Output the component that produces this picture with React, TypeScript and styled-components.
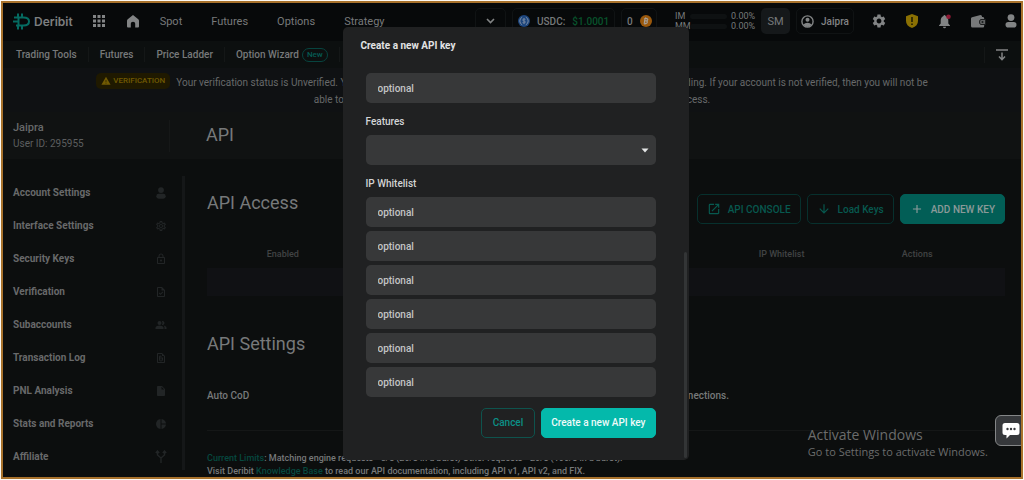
import React from "react";
import styled, { createGlobalStyle, css } from "styled-components";
import {
  MdApps,
  MdSettings,
  MdPeopleAlt,
  MdOutlineSettings,
  MdOutlineLock,
  MdInsertDriveFile,
  MdPieChart,
  MdOpenInNew,
  MdArrowDownward,
  MdAdd,
  MdWarning,
  MdOutlineTask,
  MdOutlineFilePresent,
} from "react-icons/md";

const GlobalStyle = createGlobalStyle`
  * { box-sizing: border-box; }
  body {
    margin: 0;
    background: #fdfaf4;
    font-family: Roboto, "Liberation Sans", sans-serif;
    font-size: 11px;
    color: #77797a;
  }
  h1, h2, p, ul { margin: 0; padding: 0; }
  button, input, select { font: inherit; }
  a { color: inherit; text-decoration: none; }
  svg { flex-shrink: 0; }
`;

const Frame = styled.div`
  position: relative;
  height: calc(100vh - 2px);
  margin: 1px;
  border: 2px solid #a8722c;
  background: #0c0e0e;
  overflow: hidden;
`;

/* Top bar */

const TopBar = styled.header`
  display: flex;
  align-items: center;
  justify-content: space-between;
  height: 38px;
  padding: 0 2px 2px 10px;
  background: #07090a;
`;

const BarGroup = styled.div<{ $gap: number }>`
  display: flex;
  align-items: center;
  gap: ${(p) => p.$gap}px;
`;

const TopIcons = styled(BarGroup)`
  padding-left: 11px;
`;

const Logo = styled.a`
  display: flex;
  align-items: center;
  gap: 3px;
  font-family: Inter, sans-serif;
  font-size: 12px;
  font-weight: 600;
  color: #7d7f80;
`;

const IconButton = styled.button`
  display: flex;
  align-items: center;
  justify-content: center;
  width: 16px;
  height: 16px;
  padding: 0;
  border: 0;
  background: none;
  color: #828485;
`;

const MainNav = styled.nav`
  display: flex;
  gap: 29px;
  padding-left: 1px;
  color: #77797a;
`;

const Chip = styled.div<{ $width?: number }>`
  display: flex;
  align-items: center;
  gap: 7px;
  width: ${(p) => (p.$width ? p.$width + "px" : "auto")};
  height: 26px;
  padding: 0 5px;
  border: 1px solid #101314;
  border-radius: 5px;
  font-size: 10px;
  font-weight: 500;
  white-space: nowrap;
`;

const ChipButton = styled(Chip).attrs({ as: "button" })`
  justify-content: center;
  background: none;
  color: #828485;
`;

const ModeButton = styled.button`
  width: 29px;
  height: 26px;
  padding: 0;
  border: 0;
  border-radius: 5px;
  background: #15181a;
  color: #77797a;
`;

const Price = styled.span`
  color: #07532c;
`;

const Margins = styled.div`
  display: grid;
  grid-template-columns: 11px 37px 24px;
  column-gap: 4px;
  align-items: center;
  justify-content: end;
  width: 92px;
  line-height: 10px;
  font-size: 9px;
`;

const Meter = styled.span`
  height: 5px;
  border-radius: 3px;
  background: #0e1112;
`;

/* Second bar */

const ToolBar = styled.nav`
  display: flex;
  align-items: center;
  height: 27px;
  padding: 0 2px;
  background: #0c0f0f;
`;

const Tool = styled.a`
  display: flex;
  align-items: center;
  gap: 3px;
  height: 15px;
  padding: 0 11px;
  border-right: 1px solid #141717;
  font-size: 10px;
  font-weight: 500;
`;

const NewTag = styled.span`
  padding: 0 4px;
  border: 1px solid #07443f;
  border-radius: 7px;
  line-height: 12px;
  font-size: 8px;
  color: #055c54;
`;

const CollapseButton = styled(IconButton)`
  width: 35px;
  margin-left: auto;
  border-left: 1px solid #141717;
`;

/* Banner and account header */

const Banner = styled.p`
  padding: 5px 24px 4px;
  background: #0f1113;
  line-height: 17px;
  font-size: 10px;
  text-align: center;
  color: #67696a;
`;

const Badge = styled.span`
  display: inline-flex;
  align-items: center;
  gap: 2px;
  margin-right: 6px;
  padding: 0 5px;
  border-radius: 5px;
  background: #1f1900;
  line-height: 16px;
  font-size: 8px;
  font-weight: 500;
  color: #715a02;
`;

const AccountHeader = styled.section`
  display: flex;
  align-items: center;
  height: 47px;
  padding: 0 10px;
  background: #101212;
`;

const AccountName = styled.div`
  width: 157px;
  border-right: 1px solid #161818;
  line-height: 16px;
  font-size: 10px;
  color: #5c5e5f;
  strong {
    display: block;
    font-size: 11px;
    font-weight: 500;
    color: #67696a;
  }
`;

const PageTitle = styled.h1`
  padding: 0 0 2px 36px;
  font-size: 18px;
  font-weight: 400;
  color: #77797a;
`;

/* Body */

const Body = styled.div`
  display: grid;
  grid-template-columns: 182px 1fr;
  padding-top: 17px;
`;

const Side = styled.ul`
  list-style: none;
  padding: 0 15px 0 10px;
  border-right: 3px solid #151718;
  height: 294px;
`;

const SideLink = styled.a`
  display: flex;
  align-items: center;
  justify-content: space-between;
  height: 33px;
  font-size: 10px;
  font-weight: 700;
  color: #68696a;
  svg { color: #222526; }
`;

const Main = styled.main`
  padding: 18px 16px 0 22px;
`;

const SectionHead = styled.div`
  display: flex;
  align-items: flex-start;
  justify-content: space-between;
`;

const SectionTitle = styled.h2`
  font-size: 18px;
  line-height: 18px;
  font-weight: 400;
  color: #77797a;
`;

const Action = styled.button<{ $solid?: boolean }>`
  display: flex;
  align-items: center;
  gap: 7px;
  height: 30px;
  padding: 0 9px;
  border: 1px solid #07302d;
  border-radius: 5px;
  background: none;
  font-size: 10px;
  font-weight: 500;
  color: #07594f;
  ${(p) =>
    p.$solid &&
    css`
      border-color: #025e56;
      background: #025e56;
      color: #8b9a99;
    `}
`;

const KeyTable = styled.table`
  width: 100%;
  margin-top: 15px;
  border-collapse: collapse;
  table-layout: fixed;
  th {
    height: 29px;
    padding: 0;
    font-size: 9px;
    font-weight: 500;
    color: #414344;
  }
  td {
    height: 28px;
    background: #101114;
  }
`;

const SettingsTitle = styled(SectionTitle)`
  margin-top: 39px;
`;

const SettingRow = styled.div`
  display: flex;
  justify-content: space-between;
  max-width: 522px;
  margin-top: 36px;
  line-height: 14px;
  font-size: 10px;
  font-weight: 500;
`;

const Footnote = styled.p`
  margin-top: 27px;
  padding-top: 21px;
  border-top: 1px solid #151717;
  line-height: 13px;
  font-size: 9px;
  font-weight: 500;
  a { color: #06483f; }
`;

/* Dialog */

const Overlay = styled.div`
  position: absolute;
  inset: 0;
  display: flex;
  align-items: center;
  justify-content: center;
  padding: 6px 0 0 7px;
`;

const Dialog = styled.form`
  position: relative;
  width: 346px;
  padding: 11px 33px 22px 23px;
  border-radius: 5px;
  background: #202122;
  color: #d3d4d5;
`;

const DialogTitle = styled.h2`
  margin: 0 0 19px -5px;
  line-height: 16px;
  font-size: 10px;
  font-weight: 700;
  color: #e2e3e4;
`;

const fieldStyle = css`
  display: block;
  width: 100%;
  height: 30px;
  padding: 2px 12px 0;
  border: 0;
  border-radius: 5px;
  background: #373839;
  font-size: 10px;
  font-weight: 500;
  color: #c4c5c6;
`;

const Field = styled.input`
  ${fieldStyle}
  &::placeholder { color: #c4c5c6; opacity: 1; }
`;

const Select = styled.select`
  ${fieldStyle}
  appearance: none;
`;

const SelectWrap = styled.div`
  position: relative;
  svg {
    position: absolute;
    right: 7px;
    top: 13px;
  }
`;

const FieldLabel = styled.label`
  display: block;
  padding: 11px 0 5px;
  line-height: 16px;
  font-size: 10px;
  font-weight: 500;
`;

const FieldList = styled.div`
  display: grid;
  gap: 4px;
`;

const DialogActions = styled.div`
  display: flex;
  justify-content: flex-end;
  gap: 6px;
  margin-top: 11px;
`;

const DialogButton = styled.button<{ $primary?: boolean }>`
  height: 30px;
  padding: 0 ${(p) => (p.$primary ? 9 : 11)}px;
  border: 1px solid ${(p) => (p.$primary ? "#04b9ab" : "#0e534d")};
  border-radius: 5px;
  background: ${(p) => (p.$primary ? "#04b9ab" : "transparent")};
  font-size: 10px;
  font-weight: 500;
  color: ${(p) => (p.$primary ? "#eefaf9" : "#0b9086")};
`;

const ScrollThumb = styled.div`
  position: absolute;
  right: 2px;
  bottom: 2px;
  width: 3px;
  height: 206px;
  border-radius: 2px;
  background: #333536;
`;

/* Floating items */

const Watermark = styled.div`
  position: absolute;
  right: 33px;
  bottom: 17px;
  font-family: "Open Sans", "Noto Sans", sans-serif;
  font-size: 11px;
  line-height: 16px;
  color: #6b6c6c;
  strong {
    display: block;
    font-size: 14px;
    line-height: 18px;
    font-weight: 400;
  }
`;

const ChatButton = styled.button`
  position: absolute;
  right: -5px;
  bottom: 31px;
  display: flex;
  align-items: center;
  justify-content: center;
  width: 31px;
  height: 31px;
  padding: 0;
  border: 1px solid #848687;
  border-radius: 6px;
  background: #36383b;
`;

const LogoMark = () => (
  <svg width="18" height="17" viewBox="0 0 18 17" fill="none" stroke="#056b61" strokeWidth="2">
    <path d="M5 0.5V4M9 0.5V4M5 13V16.5M9 13V16.5" />
    <path d="M1 4.5H10.5C14 4.5 16 6 16 8.5S14 12.5 10.5 12.5H3M0 8.500H6.500M5.500 4.500V12.500" />
  </svg>
);

const HomeIcon = () => (
  <svg width="12" height="13" viewBox="0 0 12 13" fill="currentColor">
    <path d="M6 0 L11.300 4.300 Q12 4.900 12 5.800 V11.500 Q12 12.500 11 12.500 H8.200 V8.600 Q8.200 6.800 6 6.800 T3.800 8.600 V12.500 H1 Q0 12.500 0 11.500 V5.800 Q0 4.900 0.700 4.300 Z" />
  </svg>
);

const ChevronIcon = () => (
  <svg width="9" height="6" viewBox="0 0 9 6" fill="none" stroke="currentColor" strokeWidth="1.600">
    <path d="M1 1L4.500 4.500L8 1" />
  </svg>
);

const UsdcIcon = () => (
  <svg width="12" height="12" viewBox="0 0 12 12" fill="none">
    <circle cx="6" cy="6" r="6" fill="#1c457d" />
    <path d="M4.200 2.200A4.200 4.200 0 0 0 4.200 9.800M7.800 2.200A4.200 4.200 0 0 1 7.800 9.800" stroke="#7d8da3" />
    <path d="M7.400 4.800Q7.200 4 6 4T4.600 5Q4.600 5.800 6 6T7.400 7Q7.400 8 6 8T4.600 7.200M6 3V9" stroke="#7d8da3" strokeWidth="0.800" />
  </svg>
);

const CoinIcon = () => (
  <svg width="12" height="12" viewBox="0 0 12 12" fill="none">
    <circle cx="6" cy="6" r="6" fill="#9a580c" />
    <path d="M5 3.200L4.200 8.800M4.300 3.600H6.800Q8 3.800 7.700 4.900T6.200 5.900H4.800M6.200 5.900Q7.600 6.200 7.300 7.300T5.800 8.400H3.700M5.800 2.400L5.600 3.400M5 8.600L4.800 9.600" stroke="#a5a09a" strokeWidth="1.100" />
  </svg>
);

const UserRingIcon = () => (
  <svg width="13" height="13" viewBox="0 0 13 13" fill="none">
    <circle cx="6.500" cy="6.500" r="5.600" stroke="#828485" strokeWidth="1.400" />
    <circle cx="6.500" cy="4.800" r="2" fill="#828485" />
    <path d="M2.300 9.600Q4 7.800 6.500 7.800T10.700 9.600Q9 12 6.500 12T2.300 9.600Z" fill="#828485" />
  </svg>
);

const ShieldIcon = () => (
  <svg width="12" height="14" viewBox="0 0 12 14">
    <path d="M6 0L12 2.200V7Q12 11.800 6 14Q0 11.800 0 7V2.200Z" fill="#8a7003" />
    <path d="M6 3V8M6 9.500V11" stroke="#1a1703" strokeWidth="1.500" />
  </svg>
);

const BellIcon = () => (
  <svg width="16" height="16" viewBox="0 0 16 16">
    <path d="M7.500 2Q8.500 2 8.500 3Q11.300 4 11.300 7.500V10.500L13 12.500V13H2V12.500L3.700 10.500V7.500Q3.700 4 6.500 3Q6.500 2 7.500 2ZM6 13.700H9Q9 15.200 7.500 15.200T6 13.700Z" fill="#828485" />
    <circle cx="11.500" cy="3.800" r="2.300" fill="#8d1833" />
  </svg>
);

const WalletIcon = () => (
  <svg width="15" height="13" viewBox="0 0 15 13">
    <path d="M0 3.500Q0 2.500 1 2.200L9.500 0Q11 0 11 1.500V2H12Q13.200 2 13.200 3.500V11Q13.200 12.500 12 12.500H1.500Q0 12.500 0 11Z" fill="#77797a" />
    <path d="M10 4.500H14.500V9.500H10Q8.500 9.500 8.500 7T10 4.500Z" fill="#606263" stroke="#1b1d1e" />
    <circle cx="11.500" cy="7" r="1" fill="#1b1d1e" />
  </svg>
);

const PersonIcon = ({ size }: { size: number }) => (
  <svg width={size} height={size} viewBox="0 0 14 14" fill="currentColor">
    <circle cx="7" cy="3.600" r="3.400" />
    <rect x="1.500" y="8" width="11" height="5.600" rx="2.800" />
  </svg>
);

const CollapseIcon = () => (
  <svg width="12" height="12" viewBox="0 0 12 12" fill="none" stroke="#828485" strokeWidth="1.500">
    <path d="M0 1H12M6 3.500V10.500M3 7.500L6 10.700L9 7.500" />
  </svg>
);

const ForkIcon = () => (
  <svg width="12" height="13" viewBox="0 0 12 13" fill="none" stroke="currentColor" strokeWidth="1.400">
    <path d="M6 13V8L2.500 5V2M6 8L9.500 5V2M0.800 3L2.500 1L4.200 3M7.800 3L9.500 1L11.200 3" />
  </svg>
);

const CaretIcon = () => (
  <svg width="8" height="5" viewBox="0 0 8 5">
    <path d="M0.500 0.500H7.500L4 4.500Z" fill="#e4e5e6" />
  </svg>
);

const ChatIcon = () => (
  <svg width="18" height="16" viewBox="0 0 18 16">
    <path d="M3 0H15Q17.500 0 17.500 2.500V9.500Q17.500 12 15 12H8L4.500 15.500V12H3Q0.500 12 0.500 9.500V2.500Q0.500 0 3 0Z" fill="#fff" />
    <circle cx="5.500" cy="6" r="1.200" fill="#36383b" />
    <circle cx="9" cy="6" r="1.200" fill="#36383b" />
    <circle cx="12.500" cy="6" r="1.200" fill="#36383b" />
  </svg>
);

const sideItems: [string, React.ReactNode][] = [
  ["Account Settings", <PersonIcon size={12} />],
  ["Interface Settings", <MdOutlineSettings size={12} />],
  ["Security Keys", <MdOutlineLock size={12} />],
  ["Verification", <MdOutlineTask size={12} />],
  ["Subaccounts", <MdPeopleAlt size={12} />],
  ["Transaction Log", <MdOutlineFilePresent size={12} />],
  ["PNL Analysis", <MdInsertDriveFile size={12} />],
  ["Stats and Reports", <MdPieChart size={12} />],
  ["Affiliate", <ForkIcon />],
];

export default function App() {
  return (
    <>
      <GlobalStyle />
      <Frame>
        <TopBar>
          <BarGroup $gap={18}>
            <Logo href="#">
              <LogoMark />
              Deribit
            </Logo>
            <IconButton aria-label="Apps"><MdApps size={18} /></IconButton>
            <IconButton aria-label="Home"><HomeIcon /></IconButton>
            <MainNav>
              <a href="#">Spot</a>
              <a href="#">Futures</a>
              <a href="#">Options</a>
              <a href="#">Strategy</a>
            </MainNav>
          </BarGroup>
          <BarGroup $gap={6}>
            <ChipButton $width={31} aria-label="More"><ChevronIcon /></ChipButton>
            <Chip $width={103}>
              <UsdcIcon />
              <span>USDC:</span>
              <Price>$1.0001</Price>
            </Chip>
            <Chip $width={36}>0 <CoinIcon /></Chip>
            <Margins>
              <span>IM</span><Meter /><span>0.00%</span>
              <span>MM</span><Meter /><span>0.00%</span>
            </Margins>
            <ModeButton>SM</ModeButton>
            <ChipButton $width={58}><UserRingIcon /> Jaipra</ChipButton>
            <TopIcons $gap={17}>
              <IconButton aria-label="Settings"><MdSettings size={16} /></IconButton>
              <IconButton aria-label="Security"><ShieldIcon /></IconButton>
              <IconButton aria-label="Notifications"><BellIcon /></IconButton>
              <IconButton aria-label="Wallet"><WalletIcon /></IconButton>
              <IconButton aria-label="Profile"><PersonIcon size={14} /></IconButton>
            </TopIcons>
          </BarGroup>
        </TopBar>

        <ToolBar>
          <Tool href="#">Trading Tools</Tool>
          <Tool href="#">Futures</Tool>
          <Tool href="#">Price Ladder</Tool>
          <Tool href="#">Option Wizard <NewTag>New</NewTag></Tool>
          <CollapseButton aria-label="Collapse"><CollapseIcon /></CollapseButton>
        </ToolBar>

        <Banner>
          <Badge><MdWarning size={10} /> VERIFICATION</Badge>
          Your verification status is Unverified. Your account must be fully verified by our team before you are able to start trading. If your account is not verified, then you will not be
          <br />
          able to deposit or trade on the platform and your trading account will have limited access.
        </Banner>

        <AccountHeader>
          <AccountName>
            <strong>Jaipra</strong>
            User ID: 295955
          </AccountName>
          <PageTitle>API</PageTitle>
        </AccountHeader>

        <Body>
          <Side>
            {sideItems.map(([name, icon]) => (
              <li key={name}>
                <SideLink href="#">{name}{icon}</SideLink>
              </li>
            ))}
          </Side>
          <Main>
            <SectionHead>
              <SectionTitle>API Access</SectionTitle>
              <BarGroup $gap={6}>
                <Action><MdOpenInNew size={14} /> API CONSOLE</Action>
                <Action><MdArrowDownward size={14} /> Load Keys</Action>
                <Action $solid><MdAdd size={14} /> ADD NEW KEY</Action>
              </BarGroup>
            </SectionHead>
            <KeyTable>
              <colgroup>
                <col width="19%" />
                <col width="23%" />
                <col width="24%" />
                <col width="12%" />
                <col width="22%" />
              </colgroup>
              <thead>
                <tr>
                  <th>Enabled</th>
                  <th>Name</th>
                  <th>Scope</th>
                  <th>IP Whitelist</th>
                  <th>Actions</th>
                </tr>
              </thead>
              <tbody>
                <tr><td colSpan={5} /></tr>
              </tbody>
            </KeyTable>
            <SettingsTitle>API Settings</SettingsTitle>
            <SettingRow>
              <span>Auto CoD</span>
              <span>Enable Cancel on Disconnect for new connections.</span>
            </SettingRow>
            <Footnote>
              <a href="#">Current Limits</a>: Matching engine requests - 5/s (20/s in a burst) Other requests - 20/s (100/s in a burst).
              <br />
              Visit Deribit <a href="#">Knowledge Base</a> to read our API documentation, including API v1, API v2, and FIX.
            </Footnote>
          </Main>
        </Body>

        <Watermark>
          <strong>Activate Windows</strong>
          Go to Settings to activate Windows.
        </Watermark>
        <ChatButton aria-label="Chat"><ChatIcon /></ChatButton>

        <Overlay>
          <Dialog role="dialog" aria-labelledby="dialog-title" onSubmit={(e) => e.preventDefault()}>
            <DialogTitle id="dialog-title">Create a new API key</DialogTitle>
            <Field aria-label="Name" placeholder="optional" />
            <FieldLabel htmlFor="features">Features</FieldLabel>
            <SelectWrap>
              <Select id="features" defaultValue="">
                <option value="" />
              </Select>
              <CaretIcon />
            </SelectWrap>
            <FieldLabel htmlFor="ip-1">IP Whitelist</FieldLabel>
            <FieldList>
              {[1, 2, 3, 4, 5, 6].map((n) => (
                <Field key={n} id={"ip-" + n} aria-label={"IP address " + n} placeholder="optional" />
              ))}
            </FieldList>
            <DialogActions>
              <DialogButton type="button">Cancel</DialogButton>
              <DialogButton $primary>Create a new API key</DialogButton>
            </DialogActions>
            <ScrollThumb />
          </Dialog>
        </Overlay>
      </Frame>
    </>
  );
}
